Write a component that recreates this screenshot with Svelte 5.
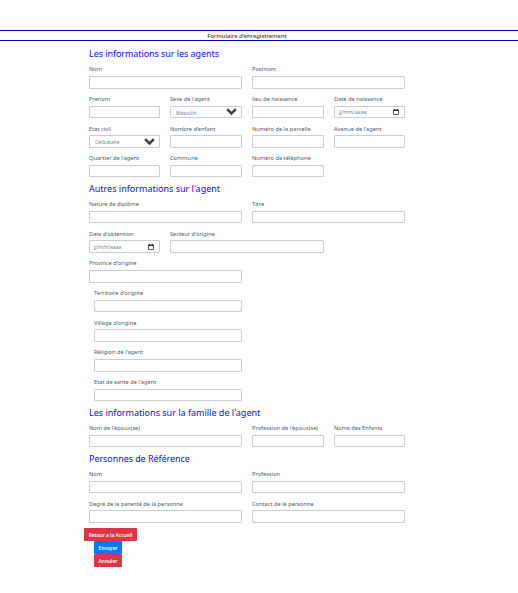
<script>
  const f = (label, span = 1, type = 'text', value = '') => ({ label, span, type, value });
  // Each row: top margin, label and control heights, optional left inset, fields on a four column grid
  const sections = [
    { title: 'Les informations sur les agents', top: 4, snug: true, rows: [
      { gap: 0, h: 13, fields: [f('Nom', 2), f('Postnom', 2)] },
      { gap: 3, h: 12, fields: [f('Prenom'), f("Sexe de l'agent", 1, 'select', 'Masculin'), f('lieu de naissance'), f('Date de naissance', 1, 'date')] },
      { gap: 4, label: 13, h: 13, fields: [f('Etat civil', 1, 'select', 'Célibataire'), f("Nombre d'enfant"), f('Numéro de la parcelle'), f("Avenue de l'agent")] },
      { gap: 3, h: 12, fields: [f("Quartier de l'agent"), f('Commune'), f('Numéro de téléphone')] }
    ] },
    { title: "Autres informations sur l'agent", top: 3, rows: [
      { gap: 0, h: 12, fields: [f('Nature de diplôme', 2), f('Titre', 2)] },
      { gap: 4, label: 13, h: 13, fields: [f("Date d'obtention", 1, 'date'), f("Secteur d'origine", 2)] },
      { gap: 3, h: 13, fields: [f("Province d'origine", 2)] },
      { gap: 3, h: 12, inset: true, fields: [f("Territoire d'origine", 2)] },
      { gap: 4, label: 13, h: 13, inset: true, fields: [f("Village d'origine", 2)] },
      { gap: 3, h: 13, inset: true, fields: [f("Réligion de l'agent", 2)] },
      { gap: 3, h: 12, inset: true, fields: [f("Etat de sante de l'agent", 2)] }
    ] },
    { title: "Les informations sur la famille de l'agent", top: 3, rows: [
      { gap: 0, h: 12, fields: [f("Nom de l'époux(se)", 2), f("Profession de l'époux(se)"), f('Noms des Enfants')] }
    ] },
    { title: 'Personnes de Référence', top: 3, snug: true, rows: [
      { gap: 0, h: 12, fields: [f('Nom', 2), f('Profession', 2)] },
      { gap: 4, label: 13, h: 13, fields: [f('Degré de la parenté de la personne', 2), f('Contact de le personne', 2)] }
    ] }
  ];
</script>

<main>
  <header>Formulaire d'enregistrement</header>
  <form>
    {#each sections as s}
      <h2 class:snug={s.snug} style:margin-top="{s.top}px">{s.title}</h2>
      {#each s.rows as r}
        <div class="row" class:inset={r.inset} style:margin-top="{r.gap}px">
          {#each r.fields as x}
            <div class="field" class:wide={x.span === 2}>
              <span class="label" class:tight={r.label === 13}>{x.label}</span>
              <div class="control" style:height="{r.h}px">
                {#if x.type === 'select'}
                  <span class="choice">{x.value}</span>
                  <svg class="chev" viewBox="0 0 10 7"><path d="M1 1 5 5 9 1" fill="none" stroke="#3c4248" stroke-width="2.3" /></svg>
                {:else if x.type === 'date'}
                  <span class="date">jj/mm/aaaa</span>
                  <svg class="cal" viewBox="0 0 6 6"><path d="M.5 1.2h5v4.3h-5z" fill="none" stroke="#222" stroke-width=".75" /><path d="M.2.7h5.6v1.1H.2zM1 0h.8v1H1zM4.2 0H5v1h-.8z" fill="#111" /></svg>
                {/if}
              </div>
            </div>
          {/each}
        </div>
      {/each}
    {/each}
    <div class="actions">
      <button type="button" class="back">Retour a la Accueil</button>
      <button type="button" class="send">Envoyer</button>
      <button type="button">Annuler</button>
    </div>
  </form>
</main>

<style>
  :global(body) { margin: 0; background: #fff; }
  main {
    box-sizing: border-box;
    height: 593px;
    padding-top: 30px;
    overflow: hidden;
    font-family: "Noto Sans", "Open Sans", sans-serif;
    color: #53585f;
  }
  header {
    box-sizing: border-box;
    height: 11px;
    padding-right: 24px;
    border-top: 1px solid #0000a0;
    border-bottom: 1px solid #0000a0;
    font-size: 5.8px;
    font-weight: 500;
    line-height: 10px;
    text-align: center;
    color: #3a3d42;
  }
  form { width: 316px; margin-left: 89px; }
  h2 {
    height: 17px;
    margin: 0;
    font-size: 9px;
    font-weight: 400;
    line-height: 17px;
    white-space: nowrap;
    color: #0d0dff;
  }
  .snug { letter-spacing: -0.07px; }
  .row {
    display: grid;
    grid-template-columns: 71px 72px 72px 71px;
    column-gap: 10px;
  }
  .inset { padding-left: 5px; grid-template-columns: 66px 72px 72px 71px; }
  .wide { grid-column: span 2; }
  .label {
    display: block;
    height: 14px;
    font-size: 5.68px;
    line-height: 14px;
    white-space: nowrap;
  }
  .tight { height: 13px; }
  .control {
    box-sizing: border-box;
    display: flex;
    align-items: center;
    justify-content: space-between;
    padding: 0 5px;
    border: 1px solid #c8ccd4;
    border-radius: 1px;
    font-size: 4.9px;
    line-height: 10px;
    color: #7c8289;
  }
  .choice { padding-top: 1px; }
  .date { margin-left: -1px; font-size: 5.1px; }
  .chev { width: 11px; height: 7.7px; margin-right: -1px; }
  .cal { width: 6px; height: 6px; }
  .actions {
    display: flex;
    flex-direction: column;
    align-items: flex-start;
    margin: 5px 0 0 -5px;
  }
  button {
    box-sizing: border-box;
    width: 28px;
    height: 13px;
    margin: 0 0 0 10px;
    padding: 1px 0 0;
    border: 0;
    border-radius: 1px;
    background: #dc3545;
    color: #fff;
    font: 600 4.85px/12px "Noto Sans", sans-serif;
    text-align: center;
    white-space: nowrap;
  }
  .back { width: 53px; margin-left: 0; }
  .send { background: #007bff; }
</style>
